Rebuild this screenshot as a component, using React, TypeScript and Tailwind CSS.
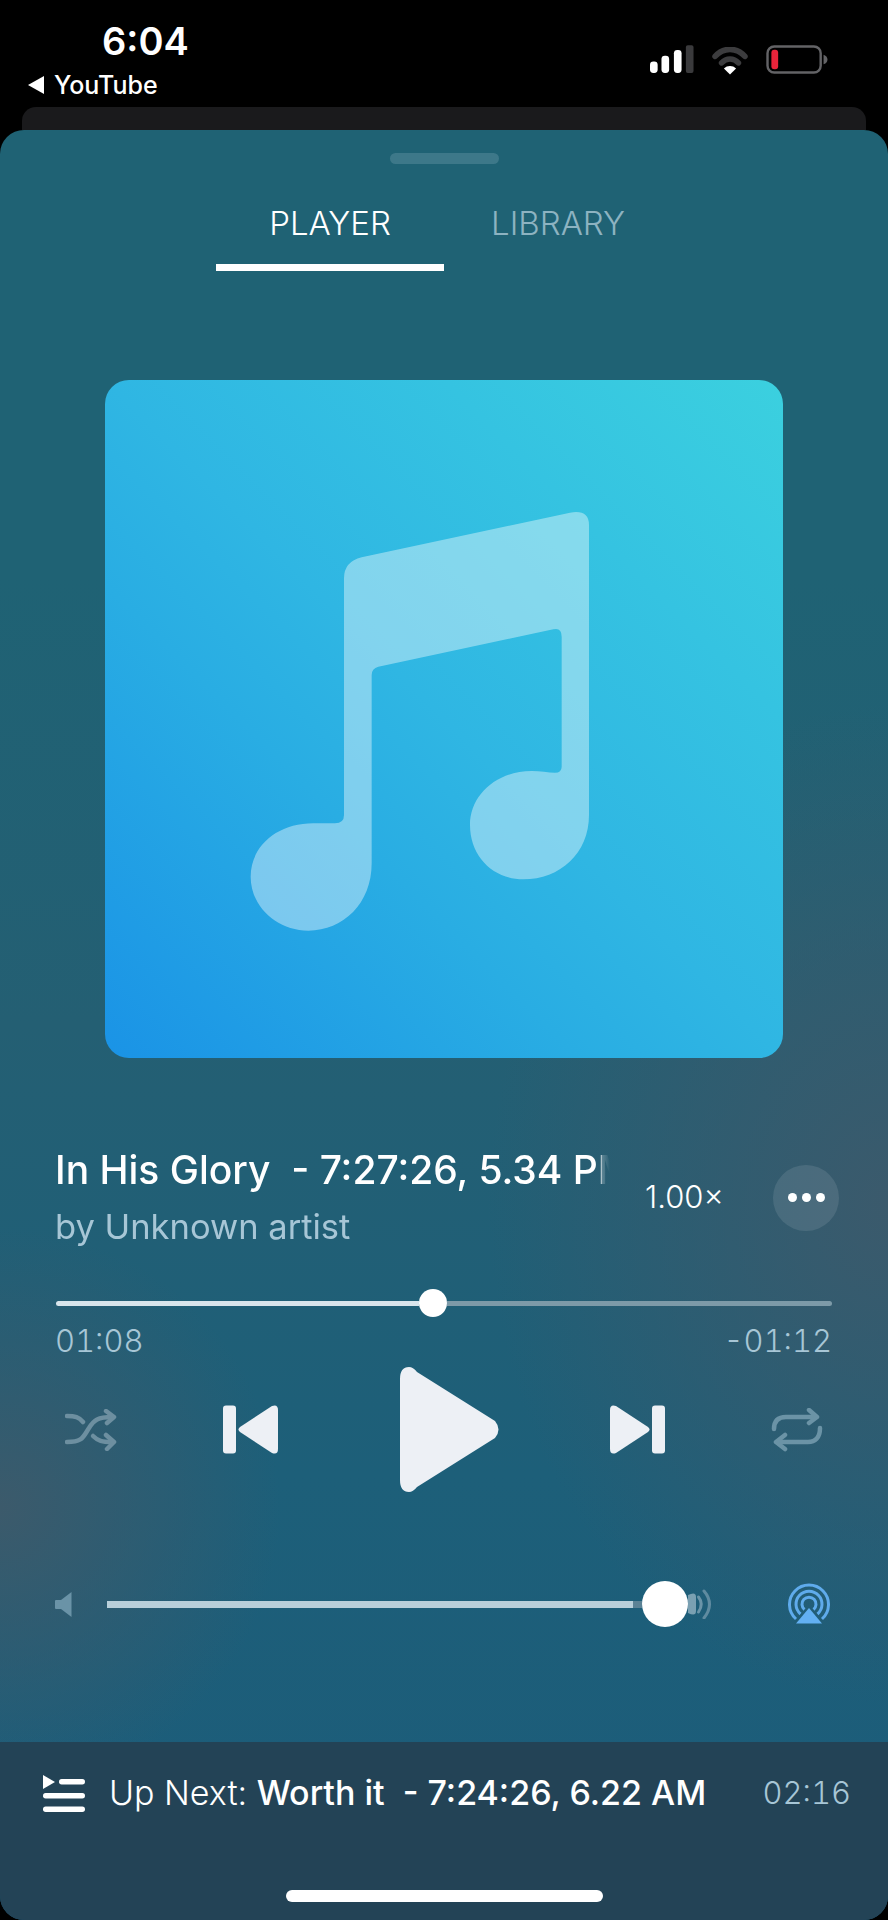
import React from "react";

const font = "font-['Inter','Noto_Sans',sans-serif]";

function Signal() {
  return (
    <svg width="44" height="29" viewBox="0 0 46 30" className="block">
      <rect x="0" y="17" width="8" height="12" rx="3.5" fill="#fff" />
      <rect x="12" y="11" width="8" height="18" rx="3.5" fill="#fff" />
      <rect x="25" y="5" width="8" height="24" rx="3.5" fill="#fff" />
      <rect x="37.5" y="0" width="8" height="29" rx="2" fill="#3a3a3c" />
    </svg>
  );
}

function Wifi() {
  return (
    <svg width="36" height="28" viewBox="0 0 38 30" className="block mt-[2px]">
      <path d="M3 10 C12 0 26 0 35 10" fill="none" stroke="#3c3c3e" strokeWidth="6" strokeLinecap="round" />
      <path d="M10 17 C15 11.5 23 11.5 28 17" fill="none" stroke="#3c3c3e" strokeWidth="6" strokeLinecap="round" />
      <path d="M12.5 23 C16 19.5 22 19.5 25.5 23 L19 29.5 Z" fill="#fff" />
    </svg>
  );
}

function Battery() {
  return (
    <svg width="62" height="29" viewBox="0 0 64 30" className="block">
      <rect x="1.5" y="1.5" width="55" height="27" rx="7" fill="none" stroke="#636366" strokeWidth="2.5" />
      <rect x="5.5" y="5" width="7" height="20" rx="3" fill="#e8243a" />
      <path d="M59.5 10 C62.5 11 63.5 13 63.5 15 C63.5 17 62.5 19 59.5 20 Z" fill="#636366" />
    </svg>
  );
}

function Note() {
  return (
    <svg width="400" height="460" viewBox="0 0 1200 1380" className="absolute left-[115px] top-[110px]">
      <path
        d="M372 265 Q372 215 425 202 L1050 68 Q1107 58 1107 105 L1107 975 C1107 1090 1020 1168 910 1168 C820 1168 750 1100 750 1005 C750 915 830 843 935 843 C960 843 985 848 1005 848 Q1025 848 1025 830 L1025 440 Q1025 412 1000 418 L475 530 Q455 535 455 555 L455 1120 C455 1240 370 1322 265 1322 C170 1322 92 1250 92 1160 C92 1070 170 1000 280 1000 L345 1000 Q372 1000 372 975 Z"
        fill="#fff"
        fillOpacity="0.4"
      />
    </svg>
  );
}

function Shuffle() {
  return (
    <svg width="52" height="42" viewBox="0 0 52 42" className="block" fill="none" stroke="#6d8fa0" strokeWidth="4.5" strokeLinecap="round" strokeLinejoin="round">
      <path d="M2 7 C10 7 14 8 18 13" />
      <path d="M2 33 C18 33 18 28 24 19 C29 11 33 8 47 8" />
      <path d="M28 27 C33 32 37 33 47 33" />
      <path d="M41 2 L49 8 L42 14" />
      <path d="M41 26 L49 33 L42 40" />
    </svg>
  );
}

function Repeat() {
  return (
    <svg width="52" height="44" viewBox="0 0 52 44" className="block" fill="none" stroke="#6b93a6" strokeWidth="4.5" strokeLinecap="round" strokeLinejoin="round">
      <path d="M3 21 C3 12 8 9 15 9 L45 9" />
      <path d="M49 20 C49 30 44 34 37 34 L7 34" />
      <path d="M38 2 L46 9 L38 15" />
      <path d="M14 27 L5 34 L14 41" />
    </svg>
  );
}

function Prev() {
  return (
    <svg width="55" height="49" viewBox="0 0 55 49" className="block" fill="#edf0f5">
      <rect x="0" y="0.5" width="13" height="48" rx="3" />
      <path d="M17 22 L49 1 Q55 -1 55 5 L55 44 Q55 50 49 48 L17 27 Q14 24.5 17 22 Z" />
    </svg>
  );
}

function Next() {
  return (
    <svg width="55" height="49" viewBox="0 0 55 49" className="block" fill="#edf0f5">
      <rect x="42" y="0.5" width="13" height="48" rx="3" />
      <path d="M38 22 L6 1 Q0 -1 0 5 L0 44 Q0 50 6 48 L38 27 Q41 24.5 38 22 Z" />
    </svg>
  );
}

function Play() {
  return (
    <svg width="99" height="125" viewBox="0 0 99 125" className="block" fill="#edf0f5">
      <path d="M0 12 Q0 0 9 0 Q13 0 17 5 L95 54 Q102 62.5 95 71 L17 120 Q13 125 9 125 Q0 125 0 113 Z" />
    </svg>
  );
}

function VolLow() {
  return (
    <svg width="17" height="25" viewBox="0 0 17 25" className="block" fill="#6a93a7">
      <path d="M16.5 0 L16.5 25 L6 17 L1 17 Q0 17 0 16 L0 9 Q0 8 1 8 L6 8 Z" />
    </svg>
  );
}

function VolHigh() {
  return (
    <svg width="24" height="30" viewBox="0 0 24 30" className="block" fill="none">
      <path d="M0 6 Q8 2 8 8 L8 22 Q8 28 0 24 Z" fill="#7aa0b2" />
      <path d="M10.5 8 Q16 15 10.5 23" stroke="#6a94a8" strokeWidth="3" strokeLinecap="round" />
      <path d="M16 2 Q27 15 16 29" stroke="#5f8ba0" strokeWidth="3" strokeLinecap="round" />
    </svg>
  );
}

function Airplay() {
  return (
    <svg width="43" height="42" viewBox="0 0 43 42" className="block" fill="none" stroke="#5fabec" strokeWidth="3">
      <path d="M9 36 A19.5 19.5 0 1 1 35 36" />
      <path d="M13.5 31 A13 13 0 1 1 30.5 31" />
      <path d="M17.5 26.5 A7 7 0 1 1 26.5 26.5" />
      <path d="M22 25 L35 40.5 L9 40.5 Z" fill="#63b0f2" stroke="none" />
    </svg>
  );
}

function Queue() {
  return (
    <svg width="42" height="37" viewBox="0 0 42 37" className="block" fill="#fff">
      <path d="M0 0 L12 7 L0 14 Z" />
      <rect x="16" y="4" width="26" height="5.5" rx="2.7" />
      <rect x="0" y="18" width="42" height="5.5" rx="2.7" />
      <rect x="0" y="31.5" width="42" height="5.5" rx="2.7" />
    </svg>
  );
}

export default function App() {
  return (
    <div className={`w-[888px] h-[1920px] bg-black flex flex-col overflow-hidden ${font}`}>
      {/* Status bar */}
      <div className="h-[107px] flex justify-between shrink-0">
        <div className="flex flex-col">
          <div className="ml-[102px] mt-[19px] h-[44px] leading-[44px] text-[38px] font-semibold text-white">6:04</div>
          <div className="ml-[28px] mt-[4px] flex items-center gap-[9px]">
            <svg width="17" height="18" viewBox="0 0 17 18" className="block">
              <path d="M16 0 L16 18 L0 9 Z" fill="#fff" />
            </svg>
            <span className="text-[25px] leading-[36px] font-medium text-white">YouTube</span>
          </div>
        </div>
        <div className="flex items-start mt-[45px] mr-[60px] gap-[18px]">
          <Signal />
          <Wifi />
          <Battery />
        </div>
      </div>
      <div className="h-[23px] mx-[22px] rounded-t-[14px] bg-[#1a1a1c] shrink-0" />

      {/* Sheet */}
      <div className="flex-1 flex flex-col rounded-[24px] overflow-hidden bg-[radial-gradient(ellipse_400px_500px_at_100%_60%,#3b5a6c_0%,rgba(59,90,108,0)_100%),radial-gradient(ellipse_280px_280px_at_0%_77%,#3c5a6b_0%,rgba(60,90,107,0)_100%),linear-gradient(180deg,#1f6274_0%,#1f6274_25%,#245f73_50%,#1d5f79_75%,#1c5c7a_100%)]">
        <div className="mt-[23px] mx-auto w-[109px] h-[11px] rounded-full bg-[#3d7889]" />

        {/* Tabs */}
        <div className="mx-auto flex h-[107px] w-[456px]">
          <div className="w-[228px] flex flex-col items-center border-b-[7px] border-white">
            <span className="mt-[38px] text-[33px] leading-[42px] font-light text-white">PLAYER</span>
          </div>
          <div className="w-[228px] flex flex-col items-center">
            <span className="mt-[38px] text-[33px] leading-[42px] font-light text-[#8db3c1]">LIBRARY</span>
          </div>
        </div>

        {/* Artwork */}
        <div className="relative mt-[109px] mx-auto w-[678px] h-[678px] shrink-0 rounded-[24px] bg-[linear-gradient(45deg,#1a93e6_0%,#29ade3_35%,#2fb6e3_50%,#3bd0df_100%)]">
          <Note />
        </div>

        {/* Title row */}
        <div className="mt-[90px] h-[99px] flex items-center">
          <div className="w-[555px] ml-[55px] overflow-hidden flex flex-col [mask-image:linear-gradient(90deg,#000_0,#000_546px,rgba(0,0,0,0.25)_547px,transparent_555px)]">
            <div className="h-[44px] leading-[44px] text-[39px] font-medium text-white whitespace-pre">In His Glory  - 7:27:26, 5.34 PM</div>
            <div className="mt-[15px] h-[40px] leading-[40px] text-[34.5px] font-normal text-[#a7c6d6] whitespace-nowrap">by Unknown artist</div>
          </div>
          <div className="ml-[35px] w-[80px] text-[31px] font-light text-white whitespace-nowrap">1.00×</div>
          <div className="ml-[48px] w-[66px] h-[66px] rounded-full bg-white/10 flex items-center justify-center gap-[5px]">
            <span className="w-[9px] h-[9px] rounded-full bg-white" />
            <span className="w-[9px] h-[9px] rounded-full bg-white" />
            <span className="w-[9px] h-[9px] rounded-full bg-white" />
          </div>
        </div>

        {/* Progress */}
        <div className="mt-[42px] mx-[56px] h-[28px] flex items-center">
          <div className="w-[363px] h-[5px] rounded-l-full bg-[#d8e5ec]" />
          <div className="w-[28px] h-[28px] rounded-full bg-white shrink-0" />
          <div className="flex-1 h-[5px] rounded-r-full bg-[#7d9aa8]" />
        </div>
        <div className="mt-[6px] ml-[55px] mr-[56px] h-[36px] flex justify-between text-[31px] leading-[36px] font-light tabular-nums text-[#a7c6d6]">
          <span>01:08</span>
          <span>-01:12</span>
        </div>

        {/* Controls */}
        <div className="mt-[8px] pl-[65px] h-[125px] flex items-center">
          <Shuffle />
          <div className="ml-[106px]"><Prev /></div>
          <div className="ml-[122px]"><Play /></div>
          <div className="ml-[111px]"><Next /></div>
          <div className="ml-[106px]"><Repeat /></div>
        </div>

        {/* Volume */}
        <div className="mt-[89px] pl-[55px] h-[46px] flex items-center">
          <VolLow />
          <div className="ml-[35px] w-[526px] h-[7px] bg-[#b8cfda]" />
          <div className="w-[9px] h-[7px] bg-[#5b8295]" />
          <div className="w-[46px] h-[46px] rounded-full bg-white shrink-0" />
          <VolHigh />
          <div className="ml-[75px]"><Airplay /></div>
        </div>

        {/* Up next */}
        <div className="mt-[115px] flex-1 bg-[#234356] flex flex-col">
          <div className="mt-[30px] h-[42px] flex items-center pl-[43px] pr-[37px]">
            <Queue />
            <div className="ml-[24px] flex-1 text-[34px] leading-[42px] text-white whitespace-pre">
              <span className="font-light">Up Next: </span>
              <span className="font-medium">Worth it  - 7:24:26, 6.22 AM</span>
            </div>
            <span className="text-[31px] leading-[42px] font-light tabular-nums text-[#a7c6d6]">02:16</span>
          </div>
          <div className="mt-[76px] mx-auto w-[317px] h-[12px] rounded-full bg-white" />
        </div>
      </div>
    </div>
  );
}
